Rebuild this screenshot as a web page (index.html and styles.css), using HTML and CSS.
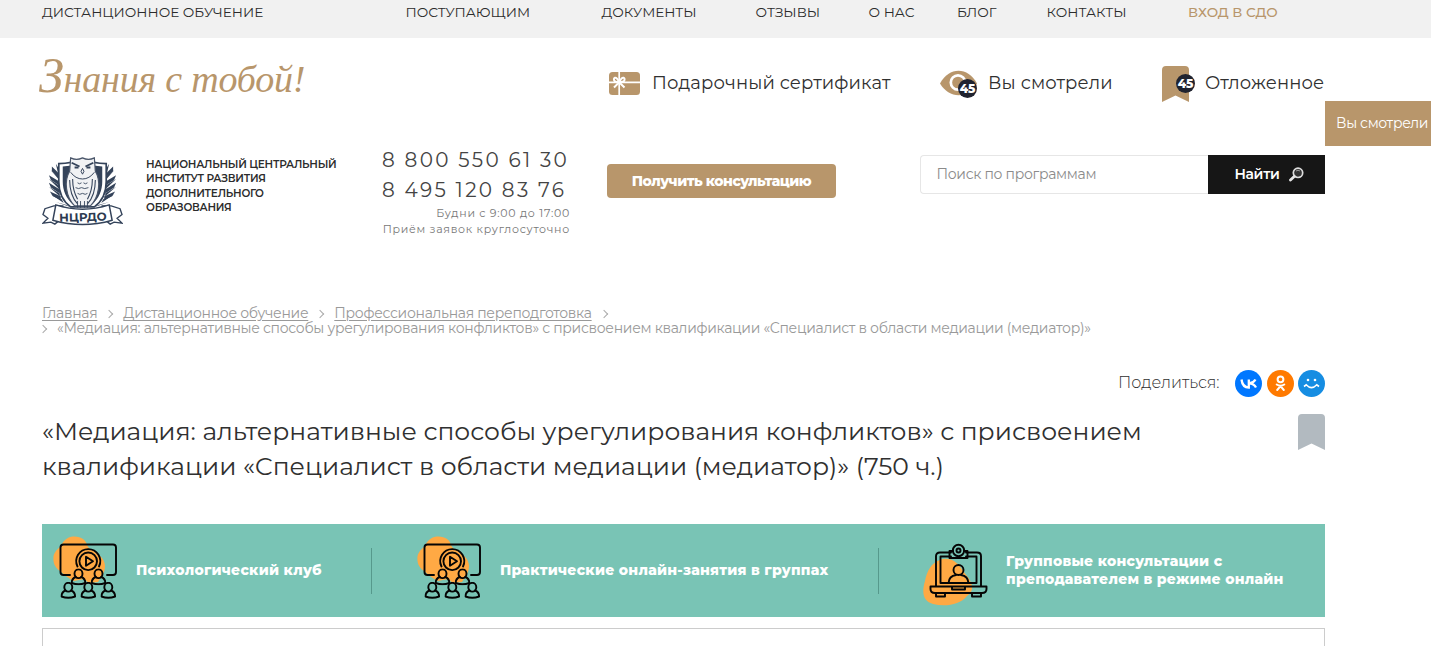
FILE: index.html
```html
<!DOCTYPE html>
<html lang="ru">
<head>
<meta charset="utf-8">
<title>НЦРДО</title>
<link rel="stylesheet" href="styles.css">
</head>
<body>
<svg class="defs" width="0" height="0">
  <symbol id="bookmark" viewBox="0 0 27 36"><path d="M4 0H23Q27 0 27 4V36L13.500 29.500L0 36V4Q0 0 4 0Z"/></symbol>
  <symbol id="person" viewBox="0 0 16 17"><ellipse cx="8" cy="5.200" rx="4" ry="4.400"/><path d="M5.300 8.500C2.500 9.500 1.200 12 1.200 14.500Q8 17 14.800 14.500C14.800 12 13.500 9.500 10.700 8.500"/></symbol>
  <symbol id="webinar" viewBox="0 0 66 66">
    <path class="blob" d="M20 .5C28 0 33 4 34 9C36 15 52 18 52 30C52 37 48 41 45 46L36 47L31 43L21 45C14 42 11 38 7 35C1 31 0 26 .5 20C2 14 7 12 9 8C11 4 15 1 20 .5Z"/>
    <g class="ink">
      <path d="M17 39H10.500Q7.500 39 7.500 36V11.500Q7.500 8.500 10.500 8.500H60Q63 8.500 63 11.500V36Q63 39 60 39H54"/>
      <path d="M24.500 30.500A12 12 0 1 1 46 30.500"/>
      <circle cx="35.200" cy="25.300" r="8.800"/>
      <path d="M33 20.800V29.800L40 25.300Z"/>
      <use href="#person" x="17.500" y="32.500" width="16" height="17"/>
      <use href="#person" x="37.500" y="32.500" width="16" height="17"/>
      <use href="#person" x="7.300" y="46" width="16" height="17"/>
      <use href="#person" x="27.300" y="46" width="16" height="17"/>
      <use href="#person" x="47.300" y="46" width="16" height="17"/>
    </g>
  </symbol>
</svg>

<nav class="topbar">
  <div class="container topnav">
    <a>ДИСТАНЦИОННОЕ ОБУЧЕНИЕ</a><a>ПОСТУПАЮЩИМ</a><a>ДОКУМЕНТЫ</a><a>ОТЗЫВЫ</a><a>О НАС</a><a>БЛОГ</a><a>КОНТАКТЫ</a><a class="login">ВХОД В СДО</a>
  </div>
</nav>

<header class="container">
  <div class="tools">
    <div class="slogan"><span>З</span>нания с тобой!</div>
    <a class="tool gift">
      <svg width="31" height="23" viewBox="0 0 31 23"><rect width="31" height="23" rx="3.500" fill="#b8966b"/><g fill="none" stroke="#fff" stroke-width="1.700"><path d="M0 10.300H31M10.200 0V23"/><path d="M10.200 10.300C7 3 3.500 6 5.500 9Q7 10.500 10.200 10.300C13.500 3 17 6 15 9Q13.500 10.500 10.200 10.300L5 15.500M10.200 10.300L15.500 15.500" stroke-width="2"/></g></svg>
      <span>Подарочный сертификат</span>
    </a>
    <a class="tool seen">
      <span class="icon eye"><svg width="37" height="27" viewBox="0 0 37 27"><path d="M0 13.500C9-3.500 28-3.500 37 13.500C28 29 9 29 0 13.500Z" fill="#b8966b"/><circle cx="18" cy="12.500" r="7.200" fill="none" stroke="#fff" stroke-width="2.700"/></svg><b class="count">45</b></span>
      <span>Вы смотрели</span>
    </a>
    <a class="tool saved">
      <span class="icon mark"><svg width="27" height="36" fill="#b8966b"><use href="#bookmark"/></svg><b class="count">45</b></span>
      <span>Отложенное</span>
    </a>
  </div>

  <div class="head">
    <svg class="logo" width="81" height="71" viewBox="0 0 82 74" preserveAspectRatio="none">
      <g fill="#34435a">
        <path d="M14 9L20 19L16 18ZM9 16L19 24V28ZM7 25L18 32V36ZM7 33L18 40V43ZM9 41L20 46L22 50ZM14 49L25 52L28 54Z"/>
        <path d="M10 12L18 20V24L10 17ZM7 21L18 28V32L9 26ZM7 29L18 36V40L9 34ZM8 38L19 43V47L11 43Z"/>
        <path d="M68 9L62 19L66 18ZM73 16L63 24V28ZM75 25L64 32V36ZM75 33L64 40V43ZM73 41L62 46L60 50ZM68 49L57 52L54 54Z"/>
        <path d="M72 12L64 20V24L72 17ZM75 21L64 28V32L73 26ZM75 29L64 36V40L73 34ZM74 38L63 43V47L71 43Z"/>
      </g>
      <path d="M17 9Q30 9 41 4Q52 9 65 9V28C65 40 60 49 53 54H29C22 49 17 40 17 28Z" fill="#fff" stroke="#34435a" stroke-width="1.700"/>
      <path d="M21 12L30 11C27 20 25 40 32 52C24 46 21 36 21 28ZM61 12L52 11C55 20 57 40 50 52C58 46 61 36 61 28Z" fill="#34435a"/>
      <path d="M29 3Q35 6 41 3Q47 6 53 3L54 17C60 27 58 44 49 53H33C24 44 22 27 28 17Z" fill="#f1f2f4" stroke="#4a566a" stroke-width="1.200"/>
      <g fill="none" stroke="#34435a">
        <path d="M30 8L38 12M52 8L44 12" stroke-width="1.800"/>
        <path d="M41 14L39.500 17L41 20L42.500 17ZM29 18Q34 25 41 25Q48 25 53 18" stroke-width="1"/>
        <path d="M33 13H37M45 13H49" stroke-width="2"/>
        <path d="M28 26Q28 42 36 51M54 26Q54 42 46 51M31 25Q31 37 36 46M51 25Q51 37 46 46" stroke-width="1.100"/>
        <path d="M36 29Q38 31 40 29M42 29Q44 31 46 29M34 34Q37 36 40 34Q43 36 47 34M36 40Q38 42 41 40Q44 42 46 40M36 48V55M39 48V55M43 48V55M46 48V55" stroke-width=".9"/>
      </g>
      <path d="M1 71L6 66L1 62L3 56L12 53H21L20 66L13 72L9 70ZM81 71L76 66L81 62L79 56L70 53H61L62 66L69 72L73 70Z" fill="#fff" stroke="#34435a" stroke-width="1.400"/>
      <path d="M14 52Q41 61 68 52L71 68Q41 77 11 68Z" fill="#fff" stroke="#34435a" stroke-width="1.500"/>
      <text x="41.500" y="69" text-anchor="middle" transform="rotate(-1.500 41 68)" class="logo-text">НЦРДО</text>
    </svg>
    <div class="org">НАЦИОНАЛЬНЫЙ ЦЕНТРАЛЬНЫЙ<br>ИНСТИТУТ РАЗВИТИЯ<br>ДОПОЛНИТЕЛЬНОГО<br>ОБРАЗОВАНИЯ</div>
    <div class="phones">
      <div class="phone">8 800 550 61 30</div>
      <div class="phone second">8 495 120 83 76</div>
      <div class="hours">Будни с 9:00 до 17:00</div>
      <div class="hours always">Приём заявок круглосуточно</div>
    </div>
    <a class="consult"><span>Получить консультацию</span></a>
    <div class="search">
      <div class="field">Поиск по программам</div>
      <div class="find"><span>Найти</span><svg width="15" height="15" viewBox="0 0 15 15"><circle cx="9" cy="5.800" r="4.700" fill="#333" stroke="#ddd" stroke-width="1.700"/><path d="M5.200 9.500L1.500 13" stroke="#e6e6e6" stroke-width="2.800" stroke-linecap="round"/><path d="M7 4Q9 2.500 11 4" stroke="#999" fill="none"/></svg></div>
    </div>
  </div>
</header>

<main class="container">
  <div class="crumbs">
    <div class="crumb-row"><a>Главная</a><i></i><a>Дистанционное обучение</a><i></i><a>Профессиональная переподготовка</a><i></i></div>
    <div class="crumb-row"><i class="first"></i><span>«Медиация: альтернативные способы урегулирования конфликтов» с присвоением квалификации «Специалист в области медиации (медиатор)»</span></div>
  </div>

  <div class="share">
    <span>Поделиться:</span>
    <svg width="27" height="27" viewBox="0 0 27 27"><circle cx="13.500" cy="13.500" r="13.500" fill="#07f"/><path d="M6.500 9.500Q7.500 17.500 13.800 17.500V9.500M20.500 9.500Q18.500 13 14 13.400Q19 13.500 21 17.500" fill="none" stroke="#fff" stroke-width="2.300"/></svg>
    <svg width="27" height="27" viewBox="0 0 27 27"><circle cx="13.500" cy="13.500" r="13.500" fill="#ff7a00"/><g fill="none" stroke="#fff" stroke-width="2" stroke-linecap="round"><circle cx="13.500" cy="9.300" r="2.900"/><path d="M9.700 14.500Q13.500 17 17.300 14.500M13.500 16.200L10.200 20M13.500 16.200L16.800 20"/></g></svg>
    <svg width="27" height="27" viewBox="0 0 27 27"><circle cx="13.500" cy="13.500" r="13.500" fill="#168de2"/><circle cx="10" cy="10" r="1.300" fill="#fff"/><circle cx="17" cy="10" r="1.300" fill="#fff"/><path d="M6 16.500L8.200 14.800Q13.500 20.500 18.800 14.800L21 16.500" fill="none" stroke="#fff" stroke-width="1.600"/></svg>
  </div>

  <div class="title-row">
    <h1>«Медиация: альтернативные способы урегулирования конфликтов» с присвоением<br>квалификации «Специалист в области медиации (медиатор)» (750 ч.)</h1>
    <svg width="27" height="36" fill="#b2bac0"><use href="#bookmark"/></svg>
  </div>

  <div class="banner">
    <div class="offer club"><svg width="66" height="66"><use href="#webinar"/></svg><span>Психологический клуб</span></div>
    <div class="offer practice"><svg width="66" height="66"><use href="#webinar"/></svg><span>Практические онлайн-занятия в группах</span></div>
    <div class="offer group">
      <svg width="66" height="64" viewBox="0 0 66 64">
        <path class="blob" d="M17 17C24 14 33 17 38 25C44 34 56 44 44 53C37 62 22 64 10 61C-1 58-1 48 2 38C4 28 8 20 17 17Z"/>
        <g class="ink">
          <path d="M28 9.500H17Q13 9.500 13 13V43M43 9.500H54Q58 9.500 58 13V43M28 13.500H17.500V40H53.500V13.500H43"/>
          <path d="M30 8H26.500V15H44.500V8H41"/><circle cx="35.500" cy="7.500" r="5.700"/><circle cx="35.500" cy="7.500" r="2"/>
          <circle cx="35.500" cy="27" r="5"/><path d="M25.500 40Q26 33 33 32M45.500 40Q45 33 38 32"/>
          <path d="M7.500 43.500H63.500V46Q63.500 50 59 50H12Q7.500 50 7.500 46ZM29 44V46.500H42V44M13 50V53.500H22V50M49 50V53.500H58V50"/>
        </g>
      </svg>
      <span>Групповые консультации с<br>преподавателем в режиме онлайн</span>
    </div>
  </div>
  <section class="panel"></section>
</main>
<aside class="viewed">Вы смотрели</aside>
</body>
</html>
```
FILE: styles.css
```css
* { box-sizing: border-box; }
body { margin: 0; width: 1431px; height: 646px; overflow: hidden; background: #fff; color: #303030; font-family: Montserrat, Inter, "Open Sans", sans-serif; white-space: nowrap; }
.defs { display: block; }
.container { width: 1283px; margin-left: 42px; }
.topbar { height: 38px; background: #f1f1f1; }
.topnav { display: grid; grid-template-columns: 363.500px 196px 154px 113px 88.500px 89.500px 141.500px 1fr; padding-top: 3px; font-size: 13.600px; line-height: 18px; color: #2b2b2b; }
.topnav .login { color: #b8966b; font-weight: 500; font-size: 13.500px; }
.tools { display: grid; grid-template-columns: 567px 331px 222px 1fr; height: 90px; align-items: center; }
.slogan { margin-left: -3px; padding-bottom: 8px; font: italic 38px/56px "Liberation Serif", serif; color: #b8966b; letter-spacing: -.2px; }
.slogan span { font-size: 50px; line-height: 40px; }
.tool { display: flex; align-items: center; font-size: 18px; letter-spacing: .12px; }
.gift { gap: 12px; }
.seen, .saved { gap: 11px; }
.icon { position: relative; display: flex; }
.eye { width: 37px; }
.mark { width: 32px; margin-top: 2px; }
.count { position: absolute; width: 19px; height: 19px; border-radius: 50%; background: #20232f; color: #fff; font-size: 12px; font-weight: 800; line-height: 19px; letter-spacing: -.2px; text-align: center; }
.eye .count { left: 18px; top: 9px; }
.mark .count { left: 14px; top: 8px; }
.head { display: grid; grid-template-columns: 104px 236px 225px 313px 405px; height: 176px; align-items: start; }
.logo { margin-top: 27px; }
.logo-text { font: 700 12px Montserrat, Inter, sans-serif; fill: #2c3a50; }
.org { margin-top: 29.500px; font-size: 10.500px; line-height: 14.500px; font-weight: 600; letter-spacing: -.24px; color: #2c2c2c; }
.phones { padding-top: 17px; width: 188px; }
.phone { font-size: 20px; line-height: 30px; letter-spacing: 2.300px; color: #444; }
.hours { font-size: 11px; line-height: 16px; letter-spacing: .73px; text-align: right; color: #777; }
.consult { width: 229px; height: 34px; margin-top: 36px; border-radius: 4px; background: #b8966b; color: #fff; display: flex; align-items: center; justify-content: center; font-size: 14px; font-weight: 800; letter-spacing: -.52px; }
.search { display: flex; margin-top: 27px; height: 39px; }
.field { width: 288px; border: 1px solid #e6e6e6; border-right: 0; border-radius: 4px 0 0 4px; padding-left: 15.500px; line-height: 37px; font-size: 14px; letter-spacing: -.3px; color: #8b8b8b; }
.find { width: 117px; background: #161616; color: #fff; display: flex; align-items: center; justify-content: center; gap: 9px; font-size: 14px; font-weight: 600; letter-spacing: -.3px; padding-left: 5px; }
.find span { margin-top: -1px; }
.crumbs { height: 66px; padding-top: 2px; font-size: 14px; line-height: 15px; letter-spacing: -.297px; color: #999; }
.crumb-row { display: flex; }
.crumb-row a { text-decoration: underline; text-underline-offset: 1.500px; }
.crumb-row i { width: 6px; height: 6px; margin: 5px 11px 0 9px; border: solid #aaa; border-width: 1px 1px 0 0; transform: rotate(45deg); }
.crumb-row .first { margin: 5px 11px 0 -2px; }
.share { display: flex; align-items: center; justify-content: flex-end; gap: 4.500px; height: 27px; font-size: 16px; font-weight: 300; }
.share span { margin: -2px 11px 0 0; }
.title-row { display: flex; justify-content: space-between; margin-top: 17px; height: 110px; }
h1 { margin: 0; font-size: 25px; line-height: 35px; font-weight: 400; letter-spacing: -.01px; }
.banner { display: grid; grid-template-columns: 330px 507px 446px; height: 93px; background: #79c4b5; align-items: center; color: #fff; font-size: 14px; font-weight: 800; letter-spacing: .23px; }
.offer { display: flex; align-items: center; height: 46px; border-right: 1px solid #56998c; gap: 17px; }
.offer span { margin-top: -2px; }
.offer.group { border: 0; line-height: 18px; }
.club { padding-left: 11px; }
.practice { padding-left: 45px; }
.group { padding-left: 44px; }
.club svg, .practice svg { margin-top: -4px; }
.group svg { margin-top: 9px; }
.blob { fill: #ffa944; }
.ink { fill: none; stroke: #050505; stroke-width: 1.900; stroke-linejoin: round; stroke-linecap: round; }
.panel { margin-top: 11px; height: 40px; border: 1px solid #ccc; }
.viewed { position: absolute; left: 1325px; top: 101px; width: 106px; height: 45px; padding-left: 11px; background: #b8966b; color: #fff; font-size: 14px; letter-spacing: -.35px; line-height: 45px; overflow: hidden; }
```
